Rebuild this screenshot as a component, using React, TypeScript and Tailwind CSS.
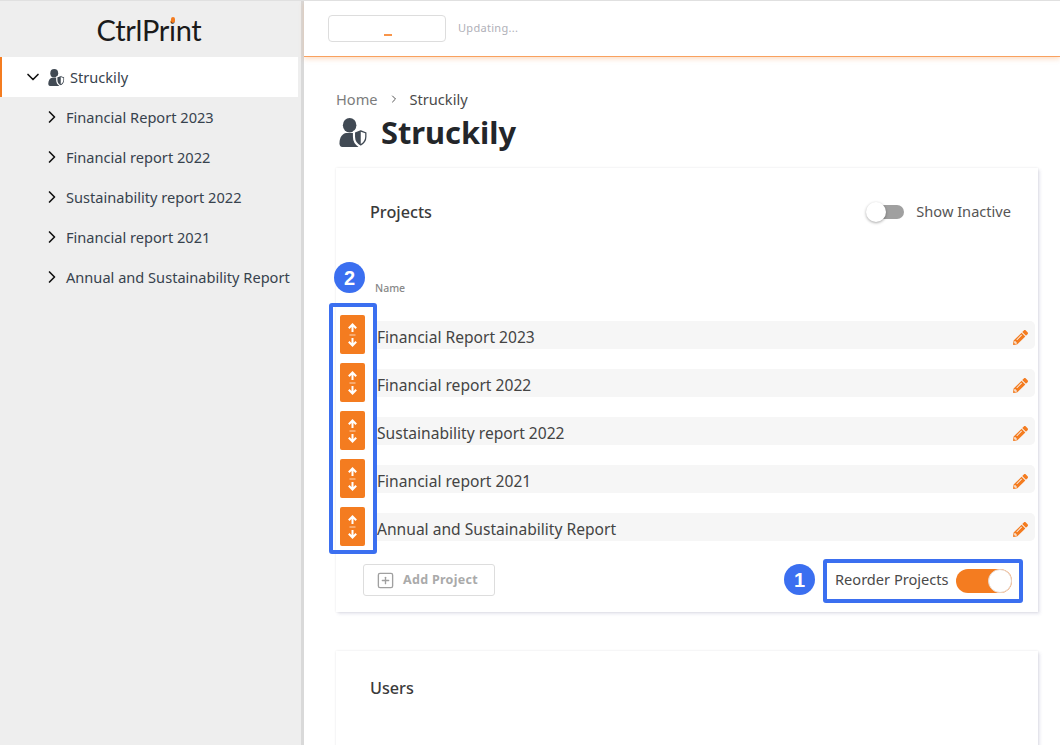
import { ChevronDown, ChevronRight, SquarePlus } from "lucide-react";
import { FaPencilAlt } from "react-icons/fa";

const projects = [
  "Financial Report 2023",
  "Financial report 2022",
  "Sustainability report 2022",
  "Financial report 2021",
  "Annual and Sustainability Report",
];

function UserShieldIcon({ size, className }: { size: number; className?: string }) {
  return (
    <svg width={size} height={size} viewBox="0 0 29 30" className={className}>
      <ellipse cx="10.500" cy="7.500" rx="7" ry="7.500" fill="#414a54" />
      <path d="M0 26c0-6 3-10 7-10.500h7c3 0 5 1 6 3v11.500H3c-2 0-3-2-3-4z" fill="#414a54" />
      <path d="M22 11.500l7 2.600v5.400c0 5-3 8.500-7 10.500-4-2-7-5.500-7-10.500v-5.400z" fill="#414a54" stroke="white" strokeWidth="2.200" />
      <path d="M22 14.200l4.600 1.700v3.600c0 3.500-2 6-4.600 7.500z" fill="white" />
    </svg>
  );
}

function ReorderIcon() {
  return (
    <svg width="11" height="24" viewBox="0 0 11 24" fill="none" stroke="white" strokeWidth="2" className="mt-[2px]">
      <path d="M5.500 9V1.500M1.800 5.200l3.700-3.700 3.700 3.700" />
      <path d="M2.500 12h6" strokeOpacity="0.7" strokeWidth="1" />
      <path d="M5.500 15v7.500M1.800 18.800l3.700 3.700 3.700-3.700" />
    </svg>
  );
}

function Badge({ n, className }: { n: string; className: string }) {
  return (
    <div
      className={`absolute flex h-[31px] w-[31px] items-center justify-center rounded-full bg-[#3b6ff0] font-['Liberation_Sans',sans-serif] text-[20px] font-bold text-white ${className}`}
    >
      {n}
    </div>
  );
}

function Sidebar() {
  return (
    <aside className="w-[304px] shrink-0 border-r-[3px] border-[#d9d9d9] bg-[#eeeeee] text-[#37424d]">
      <div className="flex h-[56px] items-center justify-center pr-[3px]">
        <div className="relative font-['Lato',sans-serif] text-[29px] leading-none tracking-[-0.3px] text-[#1a1a1a]">
          CtrlPrint
          <span className="absolute left-[74px] top-[2px] h-[6px] w-[4px] rounded-full bg-[#f47c20]" />
        </div>
      </div>
      <div className="mr-[3px] flex h-10 items-center border-l-2 border-[#f47c20] bg-white pl-[21px] text-[14.6px]">
        <ChevronDown size={20} strokeWidth={2} className="mr-[5px] text-[#111]" />
        <UserShieldIcon size={17} className="mr-[5px]" />
        <span className="mt-[1px]">Struckily</span>
      </div>
      {projects.map((p) => (
        <div key={p} className="flex h-10 items-center pl-[42px] text-[14.6px]">
          <ChevronRight size={20} strokeWidth={2} className="mb-[1px] mr-[4px] text-[#111]" />
          <span className="mt-[1px]">{p}</span>
        </div>
      ))}
    </aside>
  );
}

export default function App() {
  return (
    <div className="flex h-[745px] w-[1060px] overflow-hidden border-t border-[#e0e0e0] bg-white font-['Noto_Sans',sans-serif]">
      <Sidebar />
      <main className="min-w-0 flex-1">
        <header className="flex h-[56px] items-center border-b border-[#f9a15f] pl-[24px] shadow-[0_2px_5px_rgba(244,124,32,0.25)]">
          <div className="relative h-[27px] w-[118px] rounded-[4px] border border-[#dddddd]">
            <span className="absolute left-[55px] top-[18px] h-[1.5px] w-[8px] bg-[#f8954a]" />
          </div>
          <span className="ml-[12px] text-[11px] tracking-[0.3px] text-[#b0b0b8]">Updating...</span>
        </header>

        <div className="pl-[32px] pr-[22px]">
          <div className="pt-[32px] text-[14.6px] leading-5 text-[#4a4a4a]">
            <div className="flex items-center">
              <span className="text-[#7c7c7c]">Home</span>
              <ChevronRight size={12} strokeWidth={2} className="mx-[10px] text-[#555]" />
              Struckily
            </div>
          </div>
          <div className="mt-[5px] flex h-[36px] items-center text-[#23262a]">
            <UserShieldIcon size={29} className="ml-[3px] mr-[13px]" />
            <h1 className="text-[30.8px] font-bold leading-none">Struckily</h1>
          </div>

          <section className="relative mt-[18px] h-[444px] bg-white pl-[4px] pr-[3px] shadow-[2px_2px_3px_rgba(90,90,150,0.14),0_0_2px_rgba(60,60,60,0.12)]">
            <div className="flex h-[88px] items-center justify-between pl-[30px] pr-[24px]">
              <h2 className="text-[16.2px] font-medium text-[#3a3a3a]">Projects</h2>
              <div className="flex items-center">
                <span className="relative mr-[12px] block h-[14px] w-[37px] rounded-full bg-[#a0a0a0]">
                  <span className="absolute left-[-1px] top-[-3px] h-5 w-5 rounded-full bg-white shadow-[0_1px_3px_rgba(0,0,0,0.35)]" />
                </span>
                <span className="text-[14.6px] text-[#555]">Show Inactive</span>
              </div>
            </div>

            <div className="h-[55px] pl-[35px] pt-[24px] text-[10.5px] font-medium leading-4 text-[#888]">Name</div>

            <div className="relative">
              {projects.map((p) => (
                <div key={p} className="flex h-[48px] items-center">
                  <div className="mb-[2px] flex h-[39px] w-[25px] shrink-0 items-center justify-center rounded-[2px] bg-[#f47c20]">
                    <ReorderIcon />
                  </div>
                  <div className="ml-[8px] flex h-[28px] flex-1 items-center justify-between rounded-[5px] bg-[#f6f6f6] pl-[4px] pr-[7px] text-[15.6px] text-[#444444]">
                    <span className="mt-[6px]">{p}</span>
                    <FaPencilAlt size={15} className="mt-[4px] text-[#f47c20]" />
                  </div>
                </div>
              ))}
              <div className="pointer-events-none absolute left-[-11px] top-[-8px] h-[251px] w-[48px] rounded-[3px] border-4 border-[#3b6ff0]" />
              <Badge n="2" className="left-[-6px] top-[-49px]" />
            </div>

            <div className="relative mt-[6px] flex items-center justify-between pl-[23px]">
              <button className="flex h-[32px] w-[132px] items-center rounded-[3px] border border-[#dddddd] pl-[12px] text-[12.5px] font-bold tracking-[0.3px] text-[#aaaaaa]">
                <SquarePlus size={19} strokeWidth={1.7} className="mr-[8px] text-[#a0a0a0]" />
                Add Project
              </button>
              <div className="relative mr-[12px] mt-[2px] flex h-[44px] w-[200px] items-center rounded-[3px] border-4 border-[#3b6ff0] pl-[8px] text-[14.6px] text-[#4a4a4a]">
                <span className="mb-[2px]">Reorder Projects</span>
                <span className="relative ml-[7px] block h-[24px] w-[56px] rounded-full bg-[#f47c20]">
                  <span className="absolute right-[0px] top-[0px] h-6 w-6 rounded-full border border-[#e8d5c8] bg-white" />
                </span>
              </div>
              <Badge n="1" className="right-[220px] top-[7px]" />
            </div>
          </section>

          <section className="mt-[39px] h-[200px] bg-white pl-[34px] pt-[25px] shadow-[2px_2px_3px_rgba(90,90,150,0.14),0_0_2px_rgba(60,60,60,0.12)]">
            <h2 className="text-[16.2px] font-medium text-[#3a3a3a]">Users</h2>
          </section>
        </div>
      </main>
    </div>
  );
}
